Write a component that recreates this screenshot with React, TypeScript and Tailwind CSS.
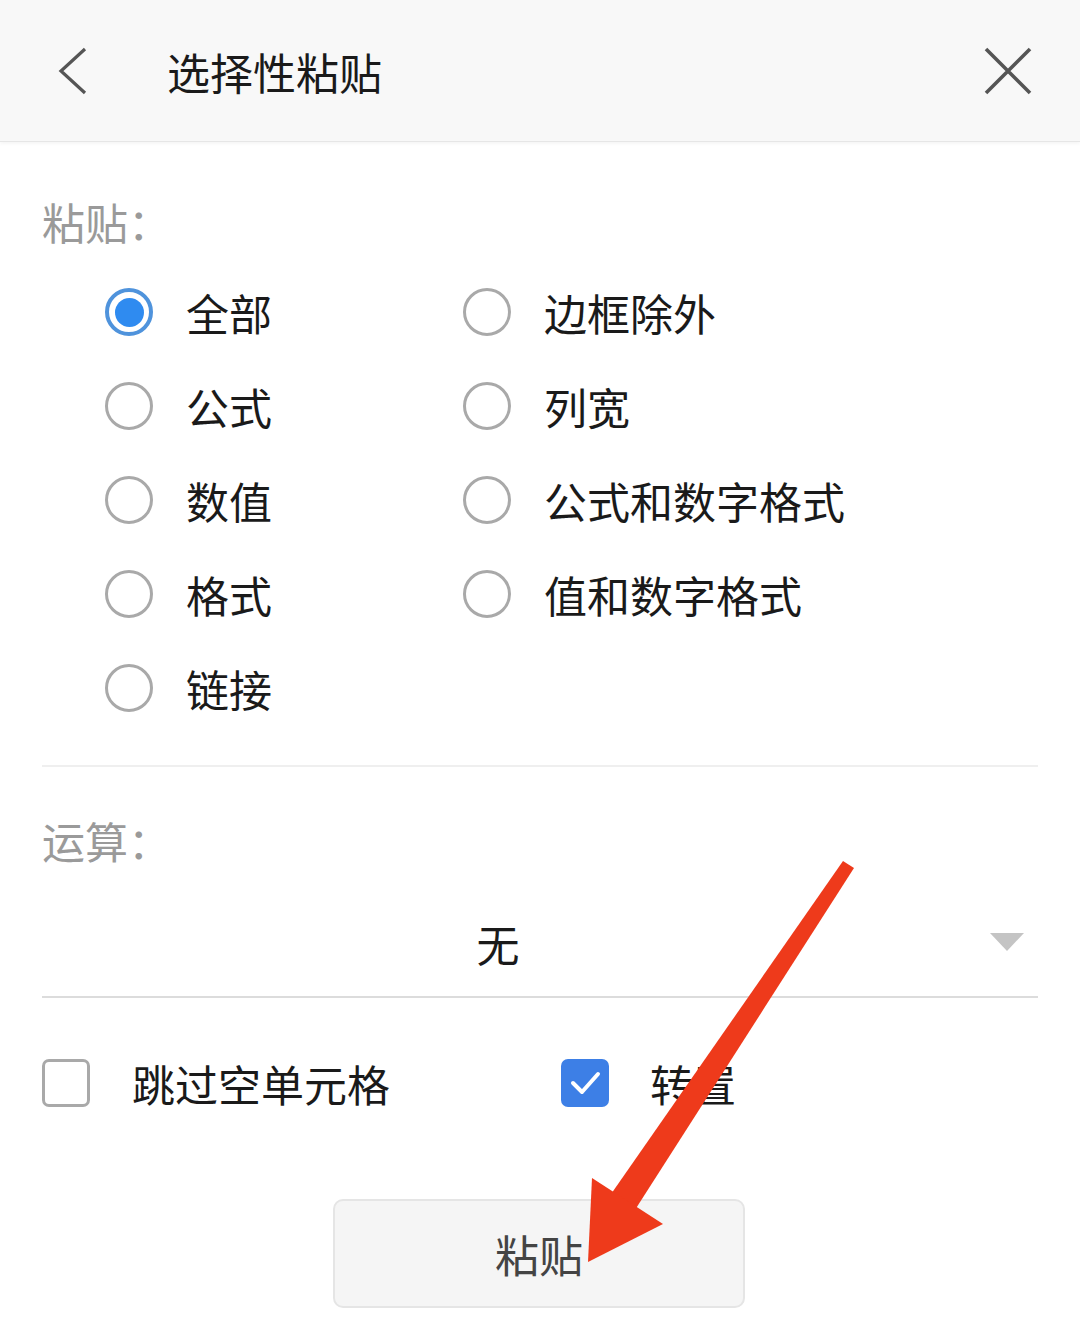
import React from "react";

const font = { fontFamily: '"Noto Sans CJK SC", "Noto Sans", sans-serif' };

function Radio({ checked }: { checked?: boolean }) {
  if (checked) {
    return (
      <div className="w-12 h-12 rounded-full border-[4px] border-[#4f93dc] flex items-center justify-center shrink-0">
        <div className="w-[29px] h-[29px] rounded-full bg-[#2f8bf0]" />
      </div>
    );
  }
  return <div className="w-12 h-12 rounded-full border-[3px] border-[#a9a9a9] shrink-0" />;
}

function RadioItem({ label, checked }: { label: string; checked?: boolean }) {
  return (
    <div className="h-[94px] flex items-center gap-[33px]">
      <Radio checked={checked} />
      <span className="text-[43px] leading-[56px] text-[#1a1a1a]">{label}</span>
    </div>
  );
}

export default function App() {
  return (
    <div className="relative w-[1080px] h-[1338px] bg-white overflow-hidden" style={font}>
      {/* Header */}
      <div className="h-[142px] bg-[#f8f8f8] border-b border-[#e6e6e6] shadow-[0_2px_3px_rgba(0,0,0,0.04)] flex items-center">
        <div className="w-[167px] pl-[56px] flex items-center">
          <svg width="34" height="48" viewBox="0 0 34 48">
            <polyline points="29,2 5,24 29,46" fill="none" stroke="#555" strokeWidth="3.2" strokeLinejoin="miter" />
          </svg>
        </div>
        <div className="flex-1 text-[43px] leading-[56px] text-[#1a1a1a]">选择性粘贴</div>
        <div className="pr-[48px] flex items-center">
          <svg width="48" height="48" viewBox="0 0 48 48">
            <path d="M2 2 L46 46 M46 2 L2 46" stroke="#555" strokeWidth="3.6" fill="none" />
          </svg>
        </div>
      </div>

      {/* Content */}
      <div className="px-[42px]">
        <div className="pt-[51px] text-[43px] leading-[56px] text-[#9a9a9a]">粘贴：</div>
        <div className="mt-[16px] pl-[63px] grid grid-cols-[358px_1fr]">
          <RadioItem label="全部" checked />
          <RadioItem label="边框除外" />
          <RadioItem label="公式" />
          <RadioItem label="列宽" />
          <RadioItem label="数值" />
          <RadioItem label="公式和数字格式" />
          <RadioItem label="格式" />
          <RadioItem label="值和数字格式" />
          <RadioItem label="链接" />
        </div>
        <div className="mt-[30px] h-[2px] bg-[#efefef]" />

        <div className="mt-[45px] text-[43px] leading-[56px] text-[#9a9a9a]">运算：</div>
        <div className="pt-[47px] pb-[25px] border-b-2 border-[#dcdcdc] relative flex items-center">
          <div className="flex-1 text-center text-[43px] leading-[56px] text-[#1a1a1a] pr-[84px]">无</div>
          <div className="absolute right-[14px] top-[65px] w-0 h-0 border-l-[17px] border-r-[17px] border-t-[18px] border-l-transparent border-r-transparent border-t-[#c4c4c4]" />
        </div>

        <div className="mt-[61px] flex items-center h-12">
          <div className="w-[519px] flex items-center gap-[42px]">
            <div className="w-12 h-12 rounded-[7px] border-[3px] border-[#a9a9a9]" />
            <span className="text-[43px] leading-[56px] text-[#1a1a1a]">跳过空单元格</span>
          </div>
          <div className="flex items-center gap-[41px]">
            <div className="w-12 h-12 rounded-[7px] bg-[#3d7fe6] flex items-center justify-center">
              <svg width="34" height="34" viewBox="0 0 34 34">
                <polyline points="5,17 14,26 30,8" fill="none" stroke="#fff" strokeWidth="4" strokeLinecap="round" strokeLinejoin="round" />
              </svg>
            </div>
            <span className="text-[43px] leading-[56px] text-[#1a1a1a]">转置</span>
          </div>
        </div>

        <div className="mt-[92px] flex justify-center">
          <button className="ml-[-2px] w-[412px] h-[109px] rounded-[10px] bg-[#f5f5f5] border-2 border-[#e5e5e5] text-[44px] text-[#444]" style={font}>
            粘贴
          </button>
        </div>
      </div>

      {/* Annotation arrow */}
      <svg className="absolute left-0 top-0 pointer-events-none" width="1080" height="1338" viewBox="0 0 1080 1338">
        <polygon points="843,861 854,868 633,1213 609,1197" fill="#ee3a1b" />
        <polygon points="588,1262 592,1178 663,1224" fill="#ee3a1b" />
      </svg>
    </div>
  );
}
